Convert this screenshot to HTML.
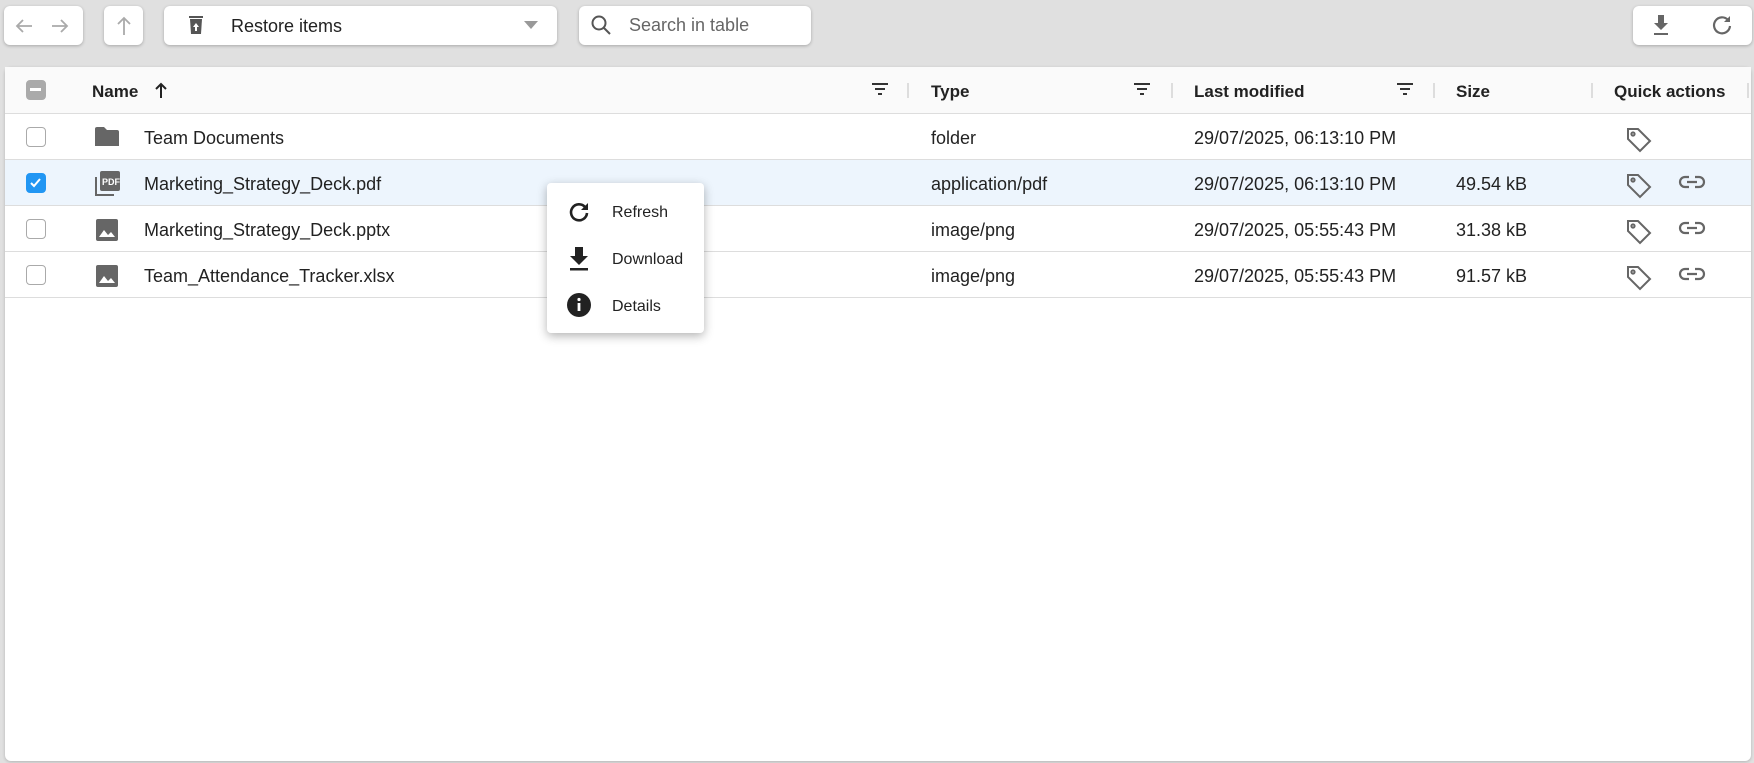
<!DOCTYPE html>
<html><head><meta charset="utf-8"><style>
*{box-sizing:border-box;margin:0;padding:0}
body{width:1754px;height:763px;background:#e0e0e0;font-family:"Liberation Sans",sans-serif;color:#222;position:relative;overflow:hidden}
.box{position:absolute;background:#fff;border-radius:6px;box-shadow:0 1px 3px rgba(0,0,0,.25)}
.abs{position:absolute}
.panel{position:absolute;left:5px;top:67px;width:1746px;height:694px;background:#fff;border-radius:6px;box-shadow:0 1px 3px rgba(0,0,0,.2)}
.row{position:absolute;left:0;width:1746px;height:46px;border-bottom:1px solid #ddd;font-size:18px}
.row span{position:absolute;top:14px}
.cb{position:absolute;left:21px;top:13px;width:20px;height:20px;border:1.5px solid #aaa;border-radius:4px;background:#fff}
.hdr{position:absolute;top:15px;font-weight:bold;font-size:17px}
.sep{position:absolute;top:16px;width:2px;height:15px;background:#ddd}
.menu{position:absolute;left:547px;top:183px;width:157px;height:150px;background:#fff;border-radius:4px;box-shadow:0 3px 10px rgba(0,0,0,.3);font-size:16px}
.menu div{position:absolute;left:65px}
</style></head><body>
<div class="box" style="left:4px;top:6px;width:79px;height:39px"></div>
<svg class="abs" style="left:14px;top:16px" width="60" height="20" fill="none" stroke="#aaa" stroke-width="1.8"><path d="M18 10H3M9 4L3 10l6 6"/><path d="M38 10h15M47 4l6 6-6 6"/></svg>
<div class="box" style="left:104px;top:6px;width:39px;height:39px"></div>
<svg class="abs" style="left:114px;top:15px" width="20" height="22" fill="none" stroke="#aaa" stroke-width="1.8"><path d="M10 20V3M4 9l6-6 6 6"/></svg>
<div class="box" style="left:164px;top:6px;width:393px;height:39px"></div>
<svg class="abs" style="left:188px;top:15px" width="16" height="20"><rect x="1" y="1" width="14" height="2" fill="#555"/><path d="M2 4h12l-1 15H3z" fill="#555"/><path d="M8 8l-3 4h2v4h2v-4h2z" fill="#fff"/></svg>
<div class="abs" style="left:231px;top:16px;font-size:18px">Restore items</div>
<svg class="abs" style="left:524px;top:21px" width="14" height="8"><path d="M0 0h14L7 8z" fill="#999"/></svg>
<div class="box" style="left:579px;top:6px;width:232px;height:39px"></div>
<svg class="abs" style="left:590px;top:14px" width="22" height="22" fill="none" stroke="#555" stroke-width="2"><circle cx="9" cy="9" r="6.5"/><path d="M14 14l6 6"/></svg>
<div class="abs" style="left:629px;top:15px;font-size:18px;color:#666">Search in table</div>
<div class="box" style="left:1633px;top:6px;width:119px;height:39px"></div>
<svg class="abs" style="left:1652px;top:14px" width="18" height="22"><path d="M6 1h6v8h4l-7 7-7-7h4z M2 19h14v2H2z" fill="#666"/></svg>
<svg class="abs" style="left:1711px;top:14px" width="22" height="22" fill="none" stroke="#666" stroke-width="2.2"><path d="M17 6A8 8 0 1 0 19 12"/><path d="M19 2v6h-6z" fill="#666" stroke="none"/></svg>

<div class="panel">
 <div class="row" style="top:0;background:#fafafa;height:47px">
  <div class="cb" style="background:#aaa;border-color:#aaa;top:13px"><div style="position:absolute;left:3px;top:7px;width:11px;height:2.5px;background:#fff"></div></div>
  <div class="hdr" style="left:87px">Name</div>
  <svg class="abs" style="left:149px;top:14px" width="14" height="18" fill="none" stroke="#222" stroke-width="2"><path d="M7 17V3M2 8l5-5 5 5"/></svg>
  <div class="hdr" style="left:926px">Type</div>
  <div class="hdr" style="left:1189px">Last modified</div>
  <div class="hdr" style="left:1451px">Size</div>
  <div class="hdr" style="left:1609px">Quick actions</div>
  <svg class="abs" style="left:866px;top:16px" width="18" height="14"><path d="M1 1h16M4 6h10M7 11h4" stroke="#333" stroke-width="2"/></svg>
  <svg class="abs" style="left:1128px;top:16px" width="18" height="14"><path d="M1 1h16M4 6h10M7 11h4" stroke="#333" stroke-width="2"/></svg>
  <svg class="abs" style="left:1391px;top:16px" width="18" height="14"><path d="M1 1h16M4 6h10M7 11h4" stroke="#333" stroke-width="2"/></svg>
  <div class="sep" style="left:902px"></div><div class="sep" style="left:1166px"></div><div class="sep" style="left:1428px"></div><div class="sep" style="left:1586px"></div><div class="sep" style="left:1742px"></div>
 </div>
 <div class="row" style="top:47px">
  <div class="cb"></div>
  <svg class="abs" style="left:89px;top:12px" width="26" height="22"><path d="M1 3a2 2 0 0 1 2-2h7l3 3h10a2 2 0 0 1 2 2v14H1z" fill="#666"/></svg>
  <span style="left:139px">Team Documents</span><span style="left:926px">folder</span><span style="left:1189px">29/07/2025, 06:13:10 PM</span>
  <svg class="abs" style="left:1620px;top:12px" width="28" height="28" fill="none" stroke="#666" stroke-width="2"><path d="M3 3h10l12 12-10 10L3 13z"/><circle cx="8" cy="8" r="1.6"/></svg>
 </div>
 <div class="row" style="top:93px;background:#edf5fd">
  <div class="cb" style="background:#2196f3;border-color:#2196f3"><svg width="17" height="17" style="position:absolute;left:0;top:0"><path d="M4 9l3 3 6-7" stroke="#fff" stroke-width="2" fill="none"/></svg></div>
  <svg class="abs" style="left:88px;top:10px" width="28" height="28"><path d="M2 7v19h19v-2H4V7z" fill="#666"/><rect x="7" y="1" width="20" height="20" rx="2" fill="#666"/><text x="9" y="15" font-size="9" font-weight="bold" fill="#fff" font-family="Liberation Sans">PDF</text></svg>
  <span style="left:139px">Marketing_Strategy_Deck.pdf</span><span style="left:926px">application/pdf</span><span style="left:1189px">29/07/2025, 06:13:10 PM</span><span style="left:1451px">49.54 kB</span>
  <svg class="abs" style="left:1620px;top:12px" width="28" height="28" fill="none" stroke="#666" stroke-width="2"><path d="M3 3h10l12 12-10 10L3 13z"/><circle cx="8" cy="8" r="1.6"/></svg>
  <svg class="abs" style="left:1673px;top:14px" width="28" height="16" fill="none" stroke="#666" stroke-width="2.2"><path d="M11 3H7a5 5 0 0 0 0 10h4M17 3h4a5 5 0 0 1 0 10h-4M9 8h10"/></svg>
 </div>
 <div class="row" style="top:139px">
  <div class="cb"></div>
  <svg class="abs" style="left:90px;top:12px" width="24" height="24"><rect x="1" y="1" width="22" height="22" rx="2" fill="#666"/><path d="M4 19l5-7 4 5 3-3 4 5z" fill="#fff"/></svg>
  <span style="left:139px">Marketing_Strategy_Deck.pptx</span><span style="left:926px">image/png</span><span style="left:1189px">29/07/2025, 05:55:43 PM</span><span style="left:1451px">31.38 kB</span>
  <svg class="abs" style="left:1620px;top:12px" width="28" height="28" fill="none" stroke="#666" stroke-width="2"><path d="M3 3h10l12 12-10 10L3 13z"/><circle cx="8" cy="8" r="1.6"/></svg>
  <svg class="abs" style="left:1673px;top:14px" width="28" height="16" fill="none" stroke="#666" stroke-width="2.2"><path d="M11 3H7a5 5 0 0 0 0 10h4M17 3h4a5 5 0 0 1 0 10h-4M9 8h10"/></svg>
 </div>
 <div class="row" style="top:185px">
  <div class="cb"></div>
  <svg class="abs" style="left:90px;top:12px" width="24" height="24"><rect x="1" y="1" width="22" height="22" rx="2" fill="#666"/><path d="M4 19l5-7 4 5 3-3 4 5z" fill="#fff"/></svg>
  <span style="left:139px">Team_Attendance_Tracker.xlsx</span><span style="left:926px">image/png</span><span style="left:1189px">29/07/2025, 05:55:43 PM</span><span style="left:1451px">91.57 kB</span>
  <svg class="abs" style="left:1620px;top:12px" width="28" height="28" fill="none" stroke="#666" stroke-width="2"><path d="M3 3h10l12 12-10 10L3 13z"/><circle cx="8" cy="8" r="1.6"/></svg>
  <svg class="abs" style="left:1673px;top:14px" width="28" height="16" fill="none" stroke="#666" stroke-width="2.2"><path d="M11 3H7a5 5 0 0 0 0 10h4M17 3h4a5 5 0 0 1 0 10h-4M9 8h10"/></svg>
 </div>
</div>

<div class="menu">
 <svg class="abs" style="left:20px;top:17px" width="24" height="24" fill="none" stroke="#222" stroke-width="2.6"><path d="M18 7A8 8 0 1 0 20 13"/><path d="M21 3v7h-7z" fill="#222" stroke="none"/></svg>
 <div style="top:21px">Refresh</div>
 <svg class="abs" style="left:21px;top:63px" width="22" height="26"><path d="M7 1h8v9h5l-9 9-9-9h5z M2 22h18v2.5H2z" fill="#222"/></svg>
 <div style="top:68px">Download</div>
 <svg class="abs" style="left:19px;top:109px" width="26" height="26"><circle cx="13" cy="13" r="12" fill="#222"/><rect x="11.6" y="11" width="2.8" height="8" fill="#fff"/><circle cx="13" cy="7.5" r="1.6" fill="#fff"/></svg>
 <div style="top:115px">Details</div>
</div>
</body></html>
